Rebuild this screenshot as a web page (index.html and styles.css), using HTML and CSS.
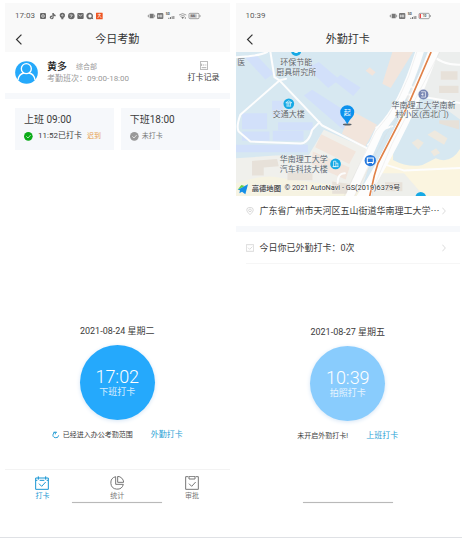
FILE: index.html
```html
<!DOCTYPE html>
<html lang="zh-CN">
<head>
<meta charset="utf-8">
<meta name="viewport" content="width=device-width, initial-scale=1">
<title>考勤打卡</title>
<link rel="stylesheet" href="styles.css">
</head>
<body>
<main class="gallery">
  <section class="phone" id="punch">
    <header class="top">
      <div class="status">
        <span class="time">17:03</span>
        <svg class="apps" viewBox="0 0 192 24" aria-hidden="true">
          <g fill="#686868">
            <rect x="3" y="3" width="18" height="18" rx="4"/>
            <path d="M40 3h4q1 5 6 6v4q-4 0-6-2v6q-1 5-6 5-6-1-6-6 1-6 7-5v4q-3 0-3 2 2 3 4 0z"/>
            <path d="M70 2q8 0 8 8 0 6-5 8v4h-6v-4q-5-2-5-8 0-8 8-8z"/>
            <circle cx="97" cy="12" r="10"/>
            <rect x="115" y="3" width="19" height="18" rx="3"/>
            <path d="M153 2a10 10 0 1 0 5 18l5 2-2-6a10 10 0 0 0-8-14zm0 5a5 5 0 1 1 0 10 5 5 0 0 1 0-10z"/>
          </g>
          <rect x="171" y="2" width="20" height="20" rx="1" fill="#ef5522"/>
          <g fill="none" stroke="#fafafa" stroke-width="2">
            <circle cx="12" cy="12" r="4"/><circle cx="70" cy="10" r="2"/>
            <path d="M92 9h8l-5 8M119 8l5 4 6-4M176 8h10M181 5v6l-5 7M181 11l6 7"/>
          </g>
        </svg>
        <svg class="signals wide" viewBox="0 0 162 24" aria-hidden="true">
          <g fill="#777">
            <path d="M8 5h12v14H8zM4 8h2v8H4zM22 8h2v8h-2zM0 11h2v2H0zM26 11h2v2h-2z"/>
            <rect x="30" y="3" width="19" height="18" rx="3"/>
            <path d="M64 17h3v4h-3zM69 15h3v6h-3zM74 13h3v8h-3zM79 12h3v9h-3z"/>
            <path d="M107 21l-4-5q4-3 8 0z"/>
          </g>
          <g fill="none" stroke="#777" stroke-width="2">
            <path d="M96 9q11-8 22 0M100 13q7-5 14 0M115 15v6"/>
            <rect x="126" y="4" width="30" height="16" rx="3"/><path d="M159 9v6"/>
          </g>
          <path d="M34 8v8M40 8v8M34 12h6M44 8v8" stroke="#fff" stroke-width="2"/>
          <rect x="129" y="7" width="20" height="10" fill="#bbb"/>
          <text x="56" y="10" class="tiny">5G</text><text x="132" y="16" class="tiny">66</text>
        </svg>
      </div>
      <div class="titlebar">
        <button class="back" type="button" aria-label="返回"><svg viewBox="0 0 12 18"><path d="M10 1 2 9l8 8"/></svg></button>
        <h1>今日考勤</h1>
      </div>
    </header>

    <div class="profile">
      <svg class="avatar" viewBox="0 0 69 69" aria-hidden="true">
        <circle cx="34.500" cy="34.500" r="34" fill="#25a9fb"/>
        <g fill="none" stroke="#fff" stroke-width="4"><circle cx="34" cy="23" r="15"/><path d="M9 57q3-19 18-21M42 36q15 2 18 21"/></g>
      </svg>
      <div class="who">
        <p class="name"><strong>黄多</strong><span>综合部</span></p>
        <p class="shift">考勤班次：09:00-18:00</p>
      </div>
      <button class="record" type="button">
        <svg viewBox="0 0 24 27" aria-hidden="true"><rect x="1" y="1" width="22" height="25" rx="2"/><path d="M5 8v7M9 12h4M16 12h3M5 20h14" /></svg>
        打卡记录
      </button>
    </div>

    <div class="shifts">
      <article class="card">
        <h2>上班 09:00</h2>
        <p><svg class="tick on" viewBox="0 0 27 27" aria-hidden="true"><circle cx="13" cy="13" r="13"/><path d="m7 13 5 5 8-9"/></svg><span class="done">11:52已打卡</span><em>迟到</em></p>
      </article>
      <article class="card">
        <h2>下班18:00</h2>
        <p><svg class="tick" viewBox="0 0 27 27" aria-hidden="true"><circle cx="13" cy="13" r="13"/><path d="m7 13 5 5 8-9"/></svg><span class="pending">未打卡</span></p>
      </article>
    </div>

    <div class="clock">
      <p class="date">2021-08-24 星期二</p>
      <button class="punch" type="button"><b>17:02</b><span>下班打卡</span></button>
      <p class="hint">
        <svg class="refresh" viewBox="0 0 24 24" aria-hidden="true"><path d="M20 13a8.500 8.500 0 1 1-5-9M4 4h6v6"/></svg>
        <span>已经进入办公考勤范围</span><a href="#field">外勤打卡</a>
      </p>
    </div>

    <nav class="tabs">
      <a class="active" href="#punch"><svg viewBox="0 0 42 42" aria-hidden="true"><path d="M2 6h38v34H2zM10 1v10M32 1v10M2 13h5M14 13h14M35 13h5M12 23l8 8 12-13"/></svg>打卡</a>
      <a href="#stats"><svg viewBox="0 0 42 42" aria-hidden="true"><path d="M17 2A19 19 0 1 0 40 25H17zM23 1v18h18A19 19 0 0 0 23 1z"/></svg>统计</a>
      <a href="#approve"><svg viewBox="0 0 42 42" aria-hidden="true"><path d="M10 2H2v38h38V2h-8M12 1h18v8H12zM12 23l8 8 12-13"/></svg>审批</a>
    </nav>
    <div class="home"></div>
  </section>

  <section class="phone" id="field">
    <header class="top">
      <div class="status">
        <span class="time">10:39</span>
        <svg class="signals" viewBox="0 0 126 24" aria-hidden="true">
          <g fill="#777">
            <path d="M8 5h12v14H8zM4 8h2v8H4zM22 8h2v8h-2zM0 11h2v2H0zM26 11h2v2h-2z"/>
            <rect x="30" y="3" width="19" height="18" rx="3"/>
            <path d="M64 17h3v4h-3zM69 15h3v6h-3zM74 13h3v8h-3zM79 12h3v9h-3z"/>
          </g>
          <g fill="none" stroke="#777" stroke-width="2"><rect x="90" y="4" width="31" height="16" rx="3"/><path d="M124 9v6"/></g>
          <path d="M34 8v8M40 8v8M34 12h6M44 8v8" stroke="#fff" stroke-width="2"/>
          <path d="M92 6h4v12h-4z" fill="#ef4545"/>
          <text x="56" y="10" class="tiny">5G</text><text x="101" y="16" class="tiny">10</text>
        </svg>
      </div>
      <div class="titlebar">
        <button class="back" type="button" aria-label="返回"><svg viewBox="0 0 12 18"><path d="M10 1 2 9l8 8"/></svg></button>
        <h1>外勤打卡</h1>
      </div>
    </header>

    <svg class="map" viewBox="12 12 672 432" preserveAspectRatio="xMidYMid slice" role="img" aria-label="地图">
      <rect x="12" y="12" width="672" height="432" fill="#d7e8f1"/>
      <path d="M12 330 130 322 230 320 275 245 425 310 380 444H12z" fill="#f0f0ec"/>
      <path d="M12 405Q100 375 150 390L380 420V444H12z" fill="#f6f3e2"/>
      <path d="M600 12H684V270L600 225 520 150z" fill="#eceeed"/>
      <path d="M475 290Q500 260 530 270L690 275V444H425z" fill="#fbf5e0"/>
      <path d="M485 180 570 130 684 215V300Q655 350 610 330L570 350Q530 360 482 335z" fill="#d7e8f1"/>
      <path d="M430 375h85l60 69H420z" fill="#eeefeb"/>
      <g fill="#d2e0fa">
        <path d="m40 30 30-12 55 58-25 18zM225 60l35-18 62 52-34 26zM305 98l20-18 60 38-22 26zM215 142l25-17 125 80-32 40zM120 158h32v48h-32zM30 195h75v48H30zM138 222h104v24H138zM122 248h92v30h-92zM30 250h82v28H30zM12 290h215v22H12z"/>
      </g>
      <g fill="#f2e5dc">
        <path d="M480 12h62l-67 108-25-13zM412 58l18 15-10 10-20-15zM358 188l76 42-35 65-70-38zM267 258l104 52-20 37-102-50zM242 310l110 48-12 36-102-45z"/>
      </g>
      <g fill="#e7e1d9">
        <path d="m60 338 75-6 5 22-45 4v24H60zM166 372h75v24h-75zM300 400l60 8v28h-60zM458 402h52v27h-52z"/>
        <path d="M625 70h50v25h-50zM620 113h58v22h-58zM620 216h60v28l-60-18z"/>
      </g>
      <path d="m585 260 22-14 38 24-10 20zM538 284l18-12 18 12-16 20zM595 310l16-10 12 14-18 10z" fill="#eee9df"/>
      <g fill="none" stroke="#fdfdfd" stroke-linecap="round" stroke-linejoin="round">
        <path d="M12 28 50 25Q90 20 105 12M115 12l12 75 15 10 20-5M142 97 270 232 420 308M142 97 25 200Q12 235 20 250L55 280 205 286Q230 285 240 245L262 222" stroke-width="6"/>
        <path d="M590 12Q625 52 684 50M515 137 684 165M530 112l22 12M432 238l25 4-50 48M316 404q0-30 22-29M462 350l54 17 168-8M450 244l30-10" stroke-width="6"/>
        <path d="M565 0Q510 180 442 244L350 450" stroke-width="25"/>
        <path d="M607 0Q520 240 387 450" stroke-width="31"/>
      </g>
      <g fill="none" stroke="#dadada" stroke-width="1"><path d="M553 12Q510 165 430 250L335 444M582 12Q520 180 460 260L366 444M622 12 480 285 413 444"/></g>
      <path d="M596 12 530 165 437 345 426 382 412 444" fill="none" stroke="#fff" stroke-width="9"/>
      <path d="M596 12 530 165 437 345 426 382 412 444" fill="none" stroke="#e08148" stroke-width="5"/>
      <g fill="#16a9e5">
        <circle cx="192" cy="9" r="15"/><circle cx="170" cy="167" r="16"/><circle cx="310" cy="347" r="16"/><circle cx="565" cy="447" r="16"/>
      </g>
      <circle cx="192" cy="7" r="8" fill="#fff"/>
      <g fill="none" stroke="#fff" stroke-width="2"><path d="m161 164 9-6 9 6zM163 174h14M165 164v9M170 164v9M175 164v9M304 355v-16h7v16zM311 345h6v10M301 355h18"/></g>
      <circle cx="414" cy="337" r="17" fill="#2679de"/>
      <path d="M405 329h18v14h-18zM407 343v4M421 343v4" fill="none" stroke="#fff" stroke-width="3"/>
      <circle cx="573" cy="139" r="15" fill="#7886b4"/>
      <path d="M566 131h13v16h-13M566 139h7M571 135v8" fill="none" stroke="#fff" stroke-width="2"/>
      <ellipse cx="345" cy="229" rx="13" ry="3" fill="#59626a"/>
      <path d="M345 228Q338 214 330 207A21 21 0 1 1 360 207Q352 214 345 228z" fill="#0b91ed"/>
      <text x="345" y="201" class="pin">起</text>
      <g class="place">
        <text x="192" y="50">环保节能</text><text x="192" y="80">厨具研究所</text>
        <text x="170" y="208">交通大楼</text>
        <text x="215" y="340">华南理工大学</text><text x="215" y="370">汽车科技大楼</text>
        <text x="573" y="179">华南理工大学南新</text><text x="569" y="207">村小区(西北门)</text>
        <text x="28" y="52">医</text>
      </g>
      <path d="m17 424 31-16-8 30-10-8-8 5 2-9z" fill="#168fe7"/>
      <path d="m17 424 11-14 10 3z" fill="#65cf45"/>
      <text x="59" y="428" class="brand">高德地图</text>
      <text x="157" y="424" class="credit">© 2021 AutoNavi - GS(2019)6379号</text>
    </svg>

    <button class="row" type="button">
      <svg class="lead" viewBox="0 0 24 24" aria-hidden="true"><path d="M12 23Q2 14 2 9a10 8 0 0 1 20 0q0 5-10 14z"/><circle cx="12" cy="10" r="4"/></svg>
      <span>广东省广州市天河区五山街道华南理工大学⋯</span>
      <svg class="chevron" viewBox="0 0 12 24" aria-hidden="true"><path d="m1 2 9 10-9 10"/></svg>
    </button>
    <button class="row count" type="button">
      <svg class="lead" viewBox="0 0 24 24" aria-hidden="true"><path d="M1 2h22v20H1zM6 11l5 5 8-8"/></svg>
      <span>今日你已外勤打卡：0次</span>
      <svg class="chevron" viewBox="0 0 12 24" aria-hidden="true"><path d="m1 2 9 10-9 10"/></svg>
    </button>

    <div class="clock field">
      <p class="date">2021-08-27 星期五</p>
      <button class="punch pale" type="button"><b>10:39</b><span>拍照打卡</span></button>
      <p class="hint"><span>未开启外勤打卡!</span><a href="#punch">上班打卡</a></p>
    </div>
    <div class="home"></div>
  </section>
</main>
</body>
</html>
```
FILE: styles.css
```css
* { box-sizing: border-box; }

body {
  margin: 0;
  background: #fff;
  color: #3c3c3c;
  font-family: Roboto, "Noto Sans CJK SC", sans-serif;
  font-size: 8px;
  line-height: 12px;
}

h1, h2, p { margin: 0; font-weight: 400; }
button { padding: 0; border: 0; background: none; color: inherit; font: inherit; cursor: pointer; }
a { color: #2b9fd5; text-decoration: none; }
svg { display: block; flex: none; }

.gallery {
  display: grid;
  grid-template-columns: 1fr 1fr;
  gap: 6px;
  min-height: calc(100vh - 1px);
  padding: 3px 2px 34px 5px;
  border-bottom: 1px solid #dfe1e5;
}

.phone { display: flex; flex-direction: column; min-width: 0; }

.top { height: 49px; background: #f9f9f9; }
.status { display: flex; align-items: center; gap: 4px; height: 25px; padding: 0 29px 0 10px; color: #5c5c5c; }
.apps { width: 64px; height: 8px; }
.signals { width: 42px; height: 8px; margin-left: auto; }
.signals.wide { width: 54px; }
.tiny { font-size: 10px; font-weight: 700; fill: #555; }
.titlebar { position: relative; height: 24px; text-align: center; }
.titlebar h1 { font-size: 11px; line-height: 24px; color: #333; }
.back { position: absolute; left: 10px; top: 5px; width: 9px; height: 12px; }
.back svg { width: 8px; height: 11px; fill: none; stroke: #333; stroke-width: 2; }

.profile { display: flex; align-items: center; gap: 9px; height: 47px; padding: 0 10px; border-bottom: 6px solid #f6f8fb; }
.avatar { width: 23px; height: 23px; }
.who { flex: 1; color: #999; }
.name { display: flex; align-items: center; gap: 9px; font-size: 7px; }
.name strong { font-size: 10px; font-weight: 500; color: #222; }
.record { display: flex; flex-direction: column; align-items: center; gap: 2px; }
.record svg { width: 8px; height: 9px; fill: none; stroke: #888; stroke-width: 2; }

.shifts { display: grid; grid-template-columns: 1fr 1fr; gap: 7px; padding: 9px 10px 0; }
.card { height: 42px; padding: 6px 9px; background: #f6f8fb; }
.card h2 { font-size: 10px; }
.card p { display: flex; align-items: center; margin-top: 4px; }
.card em { margin-left: 5px; font-size: 7px; font-style: normal; color: #e6a04b; }
.tick { width: 9px; height: 9px; fill: #999; }
.tick.on { fill: #0bab18; }
.tick path { fill: none; stroke: #fff; stroke-width: 2; }
.done { margin-left: 5px; }
.pending { margin-left: 3px; font-size: 7px; color: #777; }

.clock { display: flex; flex-direction: column; align-items: center; margin-top: auto; margin-bottom: 28px; }
.date { font-size: 9px; }
.punch {
  display: flex;
  flex-direction: column;
  align-items: center;
  justify-content: center;
  width: 75px;
  height: 75px;
  margin-top: 8px;
  border-radius: 50%;
  background: #25a9fc;
  box-shadow: 0 1px 4px #d5e5f5;
  color: #fff;
}
.punch b { font-size: 18px; font-weight: 300; line-height: 18px; }
.punch span { font-size: 9px; opacity: 0.8; }
.pale { background: #89ccfd; }
.hint { display: flex; align-items: center; margin-top: 9px; }
.hint span { font-size: 7px; }
.hint a { margin-left: 18px; }
.refresh { width: 8px; height: 8px; margin-right: 3px; fill: none; stroke: #2b9fd5; stroke-width: 3; }

.tabs { display: grid; grid-template-columns: repeat(3, 1fr); height: 33px; padding-top: 6px; border-top: 1px solid #f3f3f3; }
.tabs a { display: flex; flex-direction: column; align-items: center; font-size: 7px; color: #777; }
.tabs svg { width: 14px; height: 14px; fill: none; stroke: currentColor; stroke-width: 3; }
.tabs .active { color: #1996d3; }
.home { width: 40%; height: 1px; margin: 0 auto; background: #b9b9b9; box-shadow: 0 0 1px #ccc; }

.map { width: 100%; height: auto; }
.map text { font-family: Roboto, "Noto Sans CJK SC", sans-serif; }
.place { font-size: 24px; text-anchor: middle; fill: #59636b; paint-order: stroke; stroke: #edf2f4; stroke-width: 2; }
.map .pin { font-size: 21px; text-anchor: middle; fill: #fff; }
.brand { font-size: 22px; font-weight: 700; fill: #555; paint-order: stroke; stroke: #fff; stroke-width: 2; }
.credit { font-size: 22px; fill: #333; paint-order: stroke; stroke: #fff; stroke-width: 2; }

.row { display: flex; align-items: center; gap: 6px; height: 36px; padding: 0 14px 0 10px; border-bottom: 6px solid #f6f8fb; font-size: 9px; text-align: left; }
.row span { flex: 1; min-width: 0; white-space: nowrap; }
.lead { width: 8px; height: 8px; fill: none; stroke: #c8c8c8; stroke-width: 2; }
.chevron { width: 4px; height: 8px; fill: none; stroke: #c8c8c8; stroke-width: 2; }
.count { height: 32px; margin-left: 10px; padding-left: 0; border-bottom: 1px solid #f6f6f6; }
.field { margin-bottom: 60px; }
```
